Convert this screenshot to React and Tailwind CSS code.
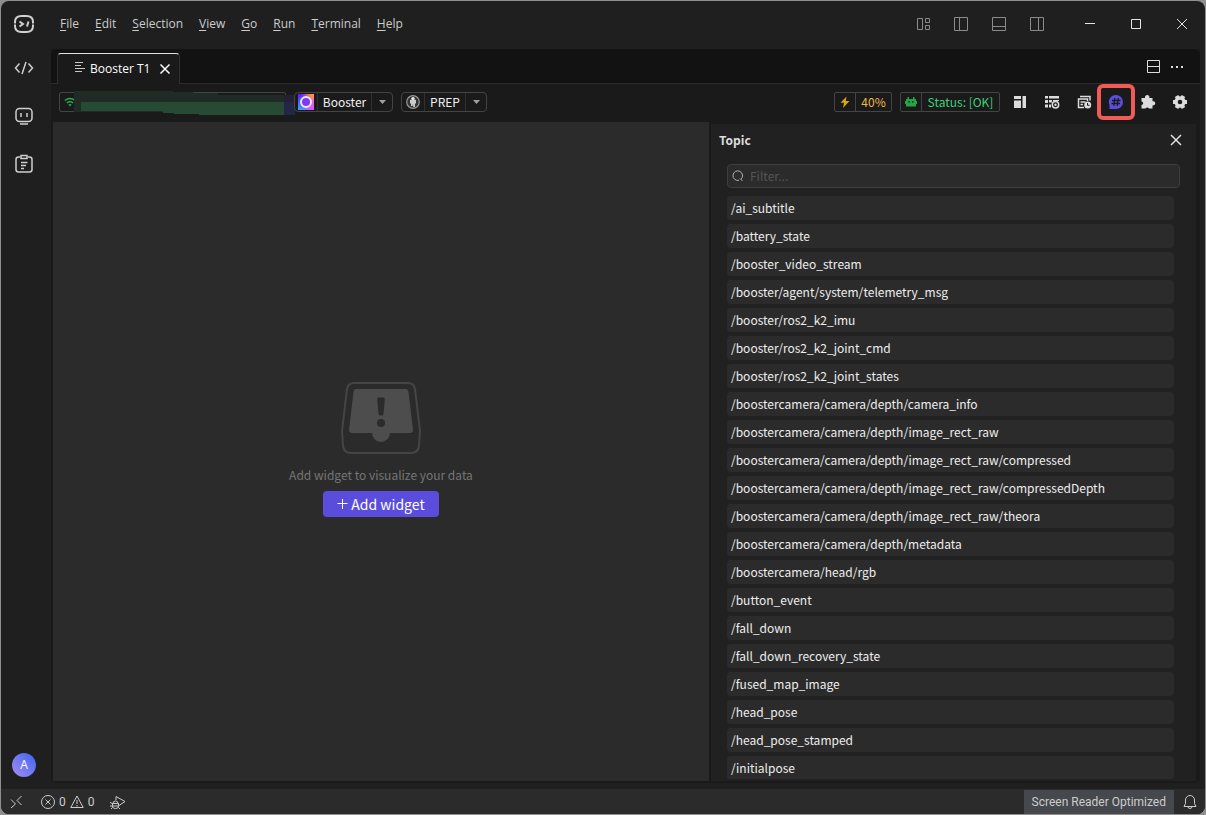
import React, { useState } from "react";

const MENUS = [ "File", "Edit", "Selection", "View", "Go", "Run", "Terminal", "Help" ];

const TOPICS = [
    "/ai_subtitle",
    "/battery_state",
    "/booster_video_stream",
    "/booster/agent/system/telemetry_msg",
    "/booster/ros2_k2_imu",
    "/booster/ros2_k2_joint_cmd",
    "/booster/ros2_k2_joint_states",
    "/boostercamera/camera/depth/camera_info",
    "/boostercamera/camera/depth/image_rect_raw",
    "/boostercamera/camera/depth/image_rect_raw/compressed",
    "/boostercamera/camera/depth/image_rect_raw/compressedDepth",
    "/boostercamera/camera/depth/image_rect_raw/theora",
    "/boostercamera/camera/depth/metadata",
    "/boostercamera/head/rgb",
    "/button_event",
    "/fall_down",
    "/fall_down_recovery_state",
    "/fused_map_image",
    "/head_pose",
    "/head_pose_stamped",
    "/initialpose",
];

const Svg = ( { size = 16, children, ...rest } ) => (
    <svg width={ size } height={ size } viewBox={ `0 0 ${ size } ${ size }` } fill="none" stroke="currentColor" aria-hidden="true" className="shrink-0" { ...rest }>
        { children }
    </svg>
);

const LAYOUT_ICONS = [
    { label: "Customize Layout", path: "M2.5 2.5h5v11h-5zM10.5 2.5h4v4h-4zM10.5 9.5h4v4h-4z" },
    { label: "Toggle Primary Side Bar", path: "M1.5 1.5h13v13h-13zM6.5 1.5v13" },
    { label: "Toggle Panel", path: "M1.5 1.5h13v13h-13zM1.5 10.5h13" },
    { label: "Toggle Secondary Side Bar", path: "M1.5 1.5h13v13h-13zM9.5 1.5v13" },
];

const WINDOW_ICONS = [
    { label: "Minimize", path: "M3 7.5h10" },
    { label: "Maximize", path: "M3.5 3.5h9v9h-9z" },
    { label: "Close", path: "M3 3l10 10M13 3L3 13" },
];

const TitleBar = () => (
    <header className="flex h-12 shrink-0 items-center pb-0.5">
        <div className="flex w-[46px] shrink-0 justify-center text-[#d0d0d0]">
            <Svg size={ 22 } strokeWidth="2">
                <path d="M2 9Q2 3 8.500 3H13.500Q20 3 20 9M2 13Q2 19 8.500 19H13.500Q20 19 20 13M1 9.500h2M19 9.500h2M1 12.500h2M19 12.500h2" />
                <path d="M6.500 8.500l3.500 2.500-3.500 2.500M15.500 8.500l-1.500 5" />
            </Svg>
        </div>
        <nav className="flex items-center gap-4 pl-[13px] text-xs text-[#cccccc]">
            { MENUS.map( ( menu ) => (
                <button key={ menu } type="button">
                    <span className="underline decoration-1 underline-offset-2">{ menu[ 0 ] }</span>{ menu.slice( 1 ) }
                </button>
            ) ) }
        </nav>
        <div className="ml-auto flex items-center gap-[22px] pr-[22px] text-[#8a8a8a]">
            { LAYOUT_ICONS.map( ( icon ) => (
                <button key={ icon.label } type="button" aria-label={ icon.label }>
                    <Svg><path d={ icon.path } /></Svg>
                </button>
            ) ) }
        </div>
        <div className="flex text-[#e4e4e4]">
            { WINDOW_ICONS.map( ( icon ) => (
                <button key={ icon.label } type="button" aria-label={ icon.label } className="flex w-[46px] justify-center">
                    <Svg><path d={ icon.path } /></Svg>
                </button>
            ) ) }
        </div>
    </header>
);

const ActivityBar = () => (
    <aside className="flex w-[50px] shrink-0 flex-col items-center gap-6 pt-[7px] pr-1 text-[#cfcfcf]">
        <button type="button" aria-label="Code">
            <Svg size={ 24 } strokeWidth="1.5"><path d="M7.5 7.5L3.5 12l4 4.5M16.5 7.5l4 4.5-4 4.5M14 6l-4 12" /></Svg>
        </button>
        <button type="button" aria-label="Robot">
            <Svg size={ 24 } strokeWidth="1.5">
                <rect x="4" y="4.5" width="16" height="13" rx="3.5" />
                <path d="M9 9v4M15 9v4M8 20h8" />
            </Svg>
        </button>
        <button type="button" aria-label="Tasks">
            <Svg size={ 24 } strokeWidth="1.5">
                <path d="M8 5H6.5Q4 5 4 7.5v10Q4 20 6.5 20h11q2.5 0 2.5-2.5v-10Q20 5 17.5 5H16M9 3.5h6v3H9zM9 10.5h6.5M9 13.5h5M9 16.5h3" />
            </Svg>
        </button>
        <button type="button" aria-label="Account" className="mt-auto mb-3 h-6 w-6 rounded-full bg-linear-to-tr from-[#a58cf0] to-[#3763f0] text-xs font-medium text-white">
            A
        </button>
    </aside>
);

const TabBar = () => (
    <div className="flex h-[35px] shrink-0 items-end rounded-t-md border-b border-[#2b2b2b] bg-[#121212]">
        <div className="relative -mb-px ml-[6px] flex h-[31px] w-[123px] items-center rounded-t-sm border-x border-t border-x-[#2f2f2f] border-t-[#e2e2e2] bg-[#1a1a1a] pl-4 text-xs text-white">
            <Svg stroke="#c8c8c8"><path d="M1 1.5h8M1 4.5h6M1 7.5h10M1 10.5h7" /></Svg>
            <span className="whitespace-nowrap">Booster T1</span>
            <button type="button" aria-label="Close tab" className="ml-auto mr-1.5">
                <Svg strokeWidth="1.5"><path d="M3.5 3.5l9 9M12.5 3.5l-9 9" /></Svg>
            </button>
        </div>
        <div className="ml-auto flex items-center gap-2 self-center pr-[15px] text-[#dddddd]">
            <button type="button" aria-label="Split editor"><Svg><path d="M2.5 2.5h12v12h-12zM2.5 8.5h12" /></Svg></button>
            <button type="button" aria-label="More actions">
                <Svg fill="currentColor" stroke="none"><path d="M2 8h2v2H2zM7 8h2v2H7zM12 8h2v2h-2z" /></Svg>
            </button>
        </div>
    </div>
);

const PickerBox = ( { label, value, icon, selectClass } ) => (
    <label className="relative flex h-5 items-center rounded-sm border border-[#444444]">
        <span className="flex w-[22px] justify-center">{ icon }</span>
        <select aria-label={ label } defaultValue={ value } className={ `${ selectClass } h-full appearance-none border-x border-[#303030] text-center text-xs leading-4 text-[#f0f0f0] outline-0` }>
            <option>{ value }</option>
        </select>
        <span className="pointer-events-none flex w-5 justify-center text-[#a0a0a0]">
            <Svg size={ 8 } fill="currentColor" stroke="none"><path d="M1 2h7L4.5 6z" /></Svg>
        </span>
    </label>
);

const BoosterIcon = () => (
    <svg width="16" height="16" viewBox="0 0 16 16" aria-hidden="true">
        <defs>
            <linearGradient id="boosterLeft" x1="0" y1="0" x2="0" y2="1">
                <stop offset="0" stopColor="#5a1ff0" />
                <stop offset="1" stopColor="#3fa0ff" />
            </linearGradient>
            <linearGradient id="boosterRight" x1="0" y1="0" x2="0" y2="1">
                <stop offset="0" stopColor="#ff9a2a" />
                <stop offset="0.6" stopColor="#e060e8" />
                <stop offset="1" stopColor="#d058ff" />
            </linearGradient>
            <linearGradient id="boosterFade">
                <stop offset="0.2" stopColor="#fff" stopOpacity="0" />
                <stop offset="0.8" stopColor="#fff" />
            </linearGradient>
            <mask id="boosterMask"><rect width="16" height="16" fill="url(#boosterFade)" /></mask>
        </defs>
        <rect width="16" height="16" fill="url(#boosterLeft)" />
        <rect width="16" height="16" fill="url(#boosterRight)" mask="url(#boosterMask)" />
        <circle cx="8" cy="8" r="5" fill="#7c3cf0" stroke="#f0e4ff" strokeWidth="2" />
    </svg>
);

const PrepIcon = () => (
    <svg width="14" height="14" viewBox="0 0 14 14" aria-hidden="true">
        <circle cx="7" cy="7" r="6.3" fill="#333" stroke="#999" strokeWidth="1.2" />
        <circle cx="7" cy="3.6" r="1.7" fill="#eee" />
        <path d="M4 4.8h6v3.7H9V12H7.2V9.5h-.5V11H5V8.5H4z" fill="#ccc" />
    </svg>
);

const StatusBox = ( { icon, children, className, textClass } ) => (
    <div className={ `flex h-5 items-center rounded-xs border border-[#444444] text-xs leading-4 ${ className }` }>
        <span className="flex w-5 shrink-0 justify-center">{ icon }</span>
        <span className={ `flex h-full flex-1 items-center justify-center border-l border-[#444444] whitespace-nowrap ${ textClass }` }>{ children }</span>
    </div>
);

const ToolButton = ( { label, children } ) => (
    <button type="button" aria-label={ label } className="flex w-8 justify-center text-[#dcdcdc]">
        { children }
    </button>
);

const Toolbar = () => (
    <div className="flex h-[38px] shrink-0 items-center gap-2 bg-[#1a1a1a] pr-1 pb-0.5 pl-2">
        <div className="relative flex h-5 w-[227px] items-center rounded-xs border border-[#444444] pl-1 text-[#2da44e]">
            <Svg size={ 12 } strokeWidth="1.3">
                <path d="M.8 4.5Q6 .5 11.2 4.5M2.8 7Q6 4.5 9.2 7" />
                <path d="M4.3 8.5Q6 7.5 7.7 8.5L6 10.5z" fill="currentColor" stroke="none" />
            </Svg>
            <svg width="222" height="24" viewBox="0 0 222 24" aria-hidden="true" className="absolute top-[-2px] left-[14px]">
                <path d="M0 0H99V1H119V2H144V4H210V24H125V22H99V21H0z" fill="#1f2b24" />
                <path d="M7 11H210V24H125V23H100V22H89V20H7z" fill="#264a33" />
                <path d="M210 4h11v7h-11z" fill="#241f35" />
                <path d="M210 11h11v13h-11z" fill="#222747" />
            </svg>
        </div>
        <PickerBox label="Robot" value="Booster" icon={ <BoosterIcon /> } selectClass="w-[55px]" />
        <PickerBox label="Mode" value="PREP" icon={ <PrepIcon /> } selectClass="w-[42px]" />

        <div className="ml-auto flex items-center gap-2">
            <StatusBox
                className="w-[58px] text-[#d9a514]"
                textClass="text-[#f0b849]"
                icon={ <Svg size={ 12 } fill="currentColor" stroke="none"><path d="M7.5 .5L1.500 6.800H5L4 12 10.500 5H6.800z" /></Svg> }
            >
                40%
            </StatusBox>
            <StatusBox
                className="w-[100px] text-[#23a447]"
                textClass="text-[#3fcf7a]"
                icon={
                    <Svg size={ 12 } fill="currentColor" stroke="none">
                        <path fillRule="evenodd" d="M2.5 1h1.5v2h4V1h1.5v2H11v2h1v3h-1v2.5H1V8H0V5h1V3h1.5zM3.5 5v1.5H5V5zM7 5v1.5h1.5V5z" />
                    </Svg>
                }
            >
                Status: [OK]
            </StatusBox>
        </div>

        <div className="-ml-1 flex items-center">
            <ToolButton label="Layout">
                <Svg fill="currentColor" stroke="none"><path d="M2 2h7v3H2zM2 6.5h7V14H2zM10.5 2H14v12h-3.5z" /></Svg>
            </ToolButton>
            <ToolButton label="Joint settings">
                <Svg fill="currentColor" stroke="none">
                    <path d="M1 2h3v2.5H1zM5 2h10v2.5H5zM1 6h3v3H1zM5 6h3v2.5H5zM1 10.5h3v3H1zM5 10.5h2v3H5zM9 6h6v1H9z" />
                    <circle cx="11.5" cy="10.7" r="3.2" stroke="currentColor" strokeWidth="1.5" fill="none" />
                    <circle cx="11.5" cy="10.7" r="1.2" />
                </Svg>
            </ToolButton>
            <ToolButton label="History">
                <Svg strokeWidth="1.5">
                    <path d="M4 2.5h10v4M8 13.5H2.5V5h9v2M4.5 8h5M4.5 10.5H7" />
                    <circle cx="11.7" cy="11" r="3.5" fill="currentColor" stroke="none" />
                    <path d="M11.5 9v2.3h2" stroke="#1a1a1a" strokeWidth="1" />
                </Svg>
            </ToolButton>
            <div className="relative flex">
                <ToolButton label="Topic">
                    <Svg stroke="#1a1a1a">
                        <path d="M8 1a7 7 0 1 1 0 14H1.5V11A7 7 0 0 1 8 1z" fill="#5b4ddb" stroke="none" />
                        <path d="M6.8 4L5.800 12M10.300 4l-1 8M4 6.500h8.500M3.500 9.500H12" strokeWidth="1.3" />
                    </Svg>
                </ToolButton>
                <span className="pointer-events-none absolute -inset-x-[3px] -inset-y-[10px] rounded-md border-4 border-[#f15b56]" />
            </div>
            <ToolButton label="Extensions">
                <Svg fill="currentColor" stroke="none">
                    <path d="M1.500 4H5a2.300 2.300 0 1 1 4.400 0H12.500v3.300a2.100 2.100 0 1 1 0 4V14.500H9a2 2 0 0 0-3.500 0h-4V11a1.700 1.700 0 0 0 0-3.400z" />
                </Svg>
            </ToolButton>
            <ToolButton label="Settings">
                <Svg>
                    <circle cx="8" cy="8" r="4" strokeWidth="3.4" />
                    <path d="M1 8h2.5M12.5 8H15M4.5 1.9l1.3 2.2M10.2 11.9l1.3 2.2M11.5 1.9l-1.3 2.2M5.8 11.9l-1.3 2.2" strokeWidth="4" />
                </Svg>
            </ToolButton>
        </div>
    </div>
);

const EmptyState = () => (
    <main className="flex min-w-0 flex-1 flex-col items-center justify-center bg-[#2b2b2b] pb-1.5">
        <svg width="80" height="74" viewBox="0 0 80 74" fill="none" aria-hidden="true">
            <path d="M13 2H67Q73 2 74 8L79 50 78 65Q77 72 70 72H10Q3 72 2 65L1 50 6 8Q7 2 13 2z" stroke="#454545" strokeWidth="2" />
            <path d="M15 8H65Q67 8 67.5 11L72 49Q72 52 69 52H49A9 9 0 0 1 31 52H11Q8 52 8 49L12.5 11Q13 8 15 8z" fill="#4d4d4d" />
            <path d="M37.5 16.5h5Q44 16.5 43.8 18L42.5 33Q42 34.5 40 34.5T37.5 33L36.2 18Q36 16.5 37.5 16.5z" fill="#2b2b2b" />
            <circle cx="40" cy="42" r="4" fill="#2b2b2b" />
        </svg>
        <p className="mt-2.5 text-xs leading-5 text-[#757575]">Add widget to visualize your data</p>
        <button type="button" className="mt-1.5 flex h-[26px] items-center gap-0.5 rounded bg-[#5b4ddb] px-3.5 text-sm text-white">
            <Svg size={ 12 }><path d="M5.5 1v10M.5 5.5h10" /></Svg>
            Add widget
        </button>
    </main>
);

const TopicPanel = () =>
{
    const [ filter, setFilter ] = useState( "" );
    const visible = TOPICS.filter( ( topic ) => topic.includes( filter.trim() ) );

    return (
        <section className="mt-0.5 flex w-[485px] shrink-0 flex-col bg-[#212121]">
            <div className="flex h-8 shrink-0 items-center justify-between pr-3 pl-2">
                <h2 className="text-xs font-bold text-[#dddddd]">Topic</h2>
                <button type="button" aria-label="Close panel" className="text-[#e0e0e0]">
                    <Svg strokeWidth="1.5"><path d="M3 3l10 10M13 3L3 13" /></Svg>
                </button>
            </div>
            <label className="mt-2 mr-4 ml-4 flex h-6 shrink-0 items-center gap-1.5 rounded border border-[#3d3d3d] bg-[#2b2b2b] pl-1 text-[#b0b0b0]">
                <Svg size={ 12 }><path d="M7 10.3A4.8 4.8 0 1 1 9 9.2M8 8.5l2.5 2.5" /></Svg>
                <input
                    value={ filter }
                    onChange={ ( e ) => setFilter( e.target.value ) }
                    type="text"
                    aria-label="Filter topics"
                    placeholder="Filter..."
                    className="min-w-0 flex-1 bg-transparent text-xs leading-5 text-[#dddddd] outline-0 placeholder:text-[#555555]"
                />
            </label>
            <ul className="mt-2 mr-[22px] mb-0.5 ml-4 flex min-h-0 flex-1 flex-col gap-1 overflow-hidden">
                { visible.map( ( topic ) => (
                    <li key={ topic } className="flex h-6 shrink-0 items-center rounded bg-[#2b2b2b] pl-1 text-xs text-[#eeeeee]">
                        { topic }
                    </li>
                ) ) }
            </ul>
        </section>
    );
};

const StatusBar = () => (
    <footer className="flex h-[25px] shrink-0 items-center bg-[#2b2b2b] pt-px pl-2 font-['Roboto',sans-serif] text-xs text-[#cccccc]">
        <button type="button" aria-label="Remote">
            <Svg size={ 14 }><path d="M2 4.5l4.5 4.5L2 13M12.5 1L8 5.5 12.5 10" /></Svg>
        </button>
        <button type="button" className="ml-[18px] flex items-center gap-1" aria-label="0 errors, 0 warnings">
            <Svg size={ 14 }><circle cx="7" cy="7" r="6.5" /><path d="M4.5 4.5l5 5M9.5 4.5l-5 5" /></Svg>
            <span>0</span>
            <Svg size={ 14 }><path d="M7 1L.8 12.5h12.4zM7 5v4M7 10v1.5" /></Svg>
            <span>0</span>
        </button>
        <button type="button" aria-label="Debug" className="ml-[15px]">
            <Svg><path d="M6 6V2.5L15 7.5l-6 4M3 9.5a2.5 2.5 0 0 1 5 0M2.5 9.5h6v3q0 2-3 2t-3-2zM0 8.5l2.5 1M0 12h8.5M1 15l1.5-1.5M8.5 13.5L10 15" /></Svg>
        </button>
        <div className="ml-auto flex h-full items-center bg-[#45484d] px-2">Screen Reader Optimized</div>
        <button type="button" aria-label="Notifications" className="flex w-[31px] justify-center">
            <Svg><path d="M2 12.5l1.5-3V6a4.5 4.5 0 0 1 9 0v3.5l1.5 3zM6 12.5a2 2 0 0 0 4 0" /></Svg>
        </button>
    </footer>
);

const App = () => (
    <div className="h-screen bg-[#8f8f8f] p-px">
        <div className="flex h-full flex-col overflow-hidden rounded-lg bg-[#1f1f1f] font-['Open_Sans',sans-serif]">
            <TitleBar />
            <div className="flex min-h-0 flex-1">
                <ActivityBar />
                <div className="mr-[5px] mb-1.5 flex min-w-0 flex-1 flex-col rounded-b-md bg-[#1a1a1a]">
                    <TabBar />
                    <div className="flex min-h-0 flex-1 flex-col font-['Noto_Sans_CJK_SC',sans-serif]">
                        <Toolbar />
                        <div className="mr-1 mb-0.5 ml-0.5 flex min-h-0 flex-1 gap-0.5">
                            <EmptyState />
                            <TopicPanel />
                        </div>
                    </div>
                </div>
            </div>
            <StatusBar />
        </div>
    </div>
);

export default App;
